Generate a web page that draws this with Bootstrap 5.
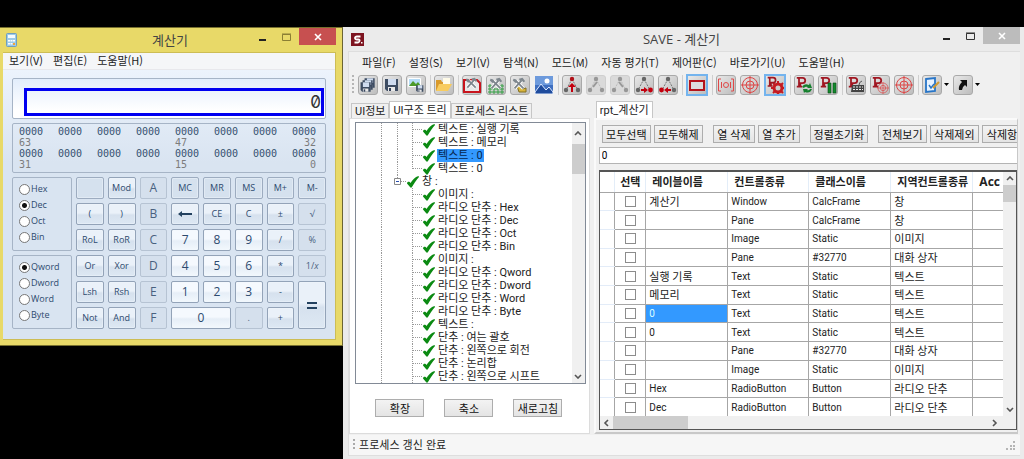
<!DOCTYPE html>
<html lang="ko">
<head>
<meta charset="utf-8">
<meta name="viewport" content="width=device-width, initial-scale=1">
<title>SAVE - 계산기</title>
<link href="https://cdn.jsdelivr.net/npm/bootstrap@5.3.0/dist/css/bootstrap.min.css" rel="stylesheet">
<style>
body{background:#000;color:#222;font:11px/14px "Noto Sans CJK KR",sans-serif;padding-top:27px;min-height:100vh}
button{font:inherit;color:inherit}
a{color:inherit;text-decoration:none}
.win-title{font:13px/24px "Open Sans","Noto Sans CJK KR",sans-serif;color:#444}
.cap-btn{border:0;background:none;padding:0;display:flex;align-items:center;justify-content:center;height:17px}
.cap-close{width:37px;background:#c75050;color:#fff}
/* calculator */
.calc{flex:0 0 33.5%;background:#e8d968;border-right:1px solid #6b6433;border-top:1px solid #77702f;border-bottom:1px solid #77702f;padding:0 6px 5px 3px;color:#2d4a6e}
.calc-client{border:1px solid #cdbd55;border-width:1px 1px 1px 0;background:linear-gradient(#ecf3fc 17px,#d9e4f1 110px)}
.calc-menu{background:#f5f6f8;height:17px;gap:10px;padding:0 6px;color:#222;border-bottom:1px solid #e8e8ec;line-height:15px}
.calc-body{padding:8px 9px 10px;gap:4px}
.calc-icon{margin:5px 0 0 3px}
.pane{border:1px solid #a6b4c6;border-radius:2px}
.display{height:41px;background:linear-gradient(#e2edfb,#fff 80%);padding:9px 1px 2px 11px}
.display input{width:100%;height:28px;border:3px solid #0000f0;border-radius:0;background:transparent;text-align:right;padding:0;font:17px/22px Inter,sans-serif;font-feature-settings:"zero";color:#333;outline:0}
.bits{font:10px/11px "DejaVu Sans Mono",monospace;padding:2px 9px 3px 6px;height:50px;color:#34506f}
.bits .idx{color:#7c7c7c}
.keys{display:grid;grid-template-columns:60px repeat(8,minmax(0,1fr));grid-template-rows:repeat(6,22px);gap:4px;font:9px/12px "Open Sans",sans-serif}
.radios{grid-column:1;grid-row:span 3;padding:3px 6px 5px;justify-content:space-between;display:flex;flex-direction:column}
.radios label{display:flex;align-items:center;gap:1px;height:16px;line-height:16px}
.radios input{appearance:none;width:11px;height:11px;margin:0;border:1px solid #777;border-radius:50%;background:#fff;flex:none}
.radios input:checked{background:radial-gradient(#111 0 2px,#fff 3px)}
.key{border:1px solid #93a3b8;border-radius:2px;padding:0;background:linear-gradient(#eaf1f9 45%,#d6e1ee 55%,#dde8f3);box-shadow:inset 0 0 0 1px #f2f7fc66}
.key:disabled{color:#49617f;border-color:#b6c3d3;background:#d5e0ed;box-shadow:none}
.flat{background:#d5e1ee;border-color:#9dacc0}
.num{font-size:12px;background:linear-gradient(#f5f9fe 45%,#e6eef7 55%,#f2f8fd)}
.big{font-size:12px}
/* main window */
.save{flex:1 1 0;min-width:0;background:#ebebeb;padding:0 4px 6px 5px;min-height:432px}
.save-icon{margin:6px 0 0 3px}
.save-client{border:1px solid #dedede;background:#f0f0f0;border-right:0}
.menu{height:20px;gap:13px;padding-left:13px;line-height:20px}
.tools{height:29px;padding:0 0 4px 3px;gap:4px}
.grip{width:2px;height:19px;background:repeating-linear-gradient(#b5b5b5 0 2px,transparent 2px 4px)}
.tool{width:20px;height:20px;padding:0;border:1px solid #a9a9a9;border-radius:3px;background:linear-gradient(135deg,#e8e8e8,#bdbdbd);display:flex;align-items:center;justify-content:center;flex:none}
.tool svg{width:18px;height:18px;flex:none}
.tool:disabled{border-color:#cfcfcf;background:#dadada}
.tool.on{width:22px;height:22px;border:2px solid #74b4ee;border-radius:0}
.tool.bare{border:0;background:none}
.sepr{width:1px;height:20px;background:#cfcfcf;margin-right:-1px}
.drop{border:0;background:none;width:7px;padding:0;margin-left:-4px;display:flex;justify-content:flex-end;align-items:center}
.tabs{height:17px;align-items:flex-end;font-family:Roboto,"Noto Sans CJK KR",sans-serif;padding-left:2px}
.tabs button{border:1px solid #c6c6c6;border-bottom:0;background:#f0f0f0;padding:0 3px;height:15px;line-height:13px;white-space:nowrap}
.tabs button.sel{background:#fff;height:17px}
.cols{gap:4px;padding-right:2px}
.leftcol{flex:0 0 36%;min-width:0}
.rightcol{flex:1 1 0;min-width:0}
.leftpane{background:#fff;border:1px solid #dcdcdc;height:316px;padding:3px 3px 0 5px}
.tree{border:1px solid #828a96;height:262px;overflow:hidden;background:#fff}
.tree ul{margin:0;padding:0;list-style:none;flex:1;font-family:Roboto,"Noto Sans CJK KR",sans-serif;--d:repeating-linear-gradient(#999 0 1px,transparent 1px 2px);--h:repeating-linear-gradient(90deg,#999 0 1px,transparent 1px 2px)}
.tree li{height:13px;line-height:13px;display:flex;align-items:center;white-space:nowrap;padding-left:67px;background:var(--d) 25px 0/1px 100% no-repeat,var(--d) 56px 0/1px 100% no-repeat,var(--h) 57px 6px/10px 1px no-repeat}
.tree li.up{background:var(--d) 25px 0/1px 100% no-repeat,var(--d) 41px 0/1px 100% no-repeat,var(--d) 56px 0/1px 100% no-repeat,var(--h) 57px 6px/10px 1px no-repeat}
.tree li.up.last{background:var(--d) 25px 0/1px 100% no-repeat,var(--d) 41px 0/1px 100% no-repeat,var(--d) 56px 0/1px 7px no-repeat,var(--h) 57px 6px/10px 1px no-repeat}
.tree li.node{padding-left:38px;background:var(--d) 25px 0/1px 100% no-repeat,var(--d) 41px 0/1px 4px no-repeat,var(--h) 45px 6px/6px 1px no-repeat}
.tree li svg{width:12px;height:12px;margin-right:2px;flex:none}
.tree li svg.exp{width:7px;height:7px;margin-right:6px}
.tree li span{padding:0 1px}
.tree li .hit{background:#3399ff;color:#06264d}
.vbar{width:13px;background:#f0f0f0;display:flex;flex-direction:column;align-items:center;flex:none}
.vbar i,.hbar i{background:#cdcdcd;flex:none}
.cmds{gap:20px;margin-top:15px;padding-right:3px}
.cmd{border:1px solid #adadad;background:linear-gradient(#f3f3f3,#e4e4e4);height:18px;line-height:14px;padding:0;width:49px;white-space:nowrap;flex:none;color:#111}
.w42{width:42px}.w58{width:58px}
.rightpane{border:2px solid #fafafa;border-right:1px solid #c8c8c8;border-bottom-color:#c8c8c8;height:316px;padding:5px 0 0 3px}
.strip{gap:3px;overflow:hidden;padding-left:3px}
.strip .gapr{margin-right:7px}
.val{border:1px solid #b4b4b4;border-right:0;height:17px;width:100%;padding:0 2px;font:10px/12px Roboto,sans-serif;background:#fff;display:block;margin:4px 0 6px;border-radius:0}
.gridbox{border:2px solid #555;border-width:2px 1px 1px 1px;background:#fff;height:260px;overflow:hidden}
.sheet{table-layout:fixed;width:100%;height:244px;border-collapse:collapse;font:10px/15px Roboto,"Noto Sans CJK KR",sans-serif;color:#222}
.sheet th,.sheet td{border:1px solid #a6a6a6;border-width:0 0 1px 1px;padding:0 0 0 3px;white-space:nowrap;overflow:hidden}
.sheet th{font:bold 11px/15px "Noto Sans CJK KR",sans-serif;padding-left:6px;border-left-color:#e3edf8;height:20px}
.sheet td:first-child{border-color:#e3ecf8;border-left:0}
.sheet th:first-child{border-left:0}
.sheet td:nth-child(2),.sheet th:nth-child(2){padding:0;text-align:center}
.sheet td.ko{font-size:11px;padding-top:2px}
.sheet .pick{background:#3399ff;color:#dff}
.sheet input{appearance:none;width:11px;height:11px;border:1px solid #8c8c8c;margin:0;background:#fff;display:block;margin:0 auto}
.sheet .acc{font:bold 12px/15px "Open Sans",sans-serif}
.sheet tr:last-child td{border-bottom:0}
.hbar{height:13px;background:#f0f0f0;display:flex;align-items:center}
.status{height:20px;background:#f6f6f6;padding:0 0 0 4px;line-height:18px;margin-top:1px}
</style>
</head>
<body>
<svg width="0" height="0" class="position-absolute" aria-hidden="true">
 <defs>
 <symbol id="disk" viewBox="0 0 18 18"><path d="M2 3h13v12H4l-2-2z" fill="#3d4c62"/><path d="M5 3h8v6H5z" fill="#cfdcf0"/><path d="M5 11h7v4H5z" fill="#e9e9e9"/><path d="M6 12h2v3H6z" fill="#33415a"/></symbol>
 <symbol id="tri" viewBox="0 0 18 18"><path d="M9 3 3 14M9 3l6 11" stroke="#777" stroke-dasharray="2 1"/></symbol>
 <symbol id="target" viewBox="0 0 18 18"><g fill="none" stroke="#dd4545"><circle cx="9" cy="9" r="7.500"/><circle cx="9" cy="9" r="4"/><path d="M9 0v18M0 9h18"/></g></symbol>
 <symbol id="pp" viewBox="0 0 18 18"><path d="M2 2h6.500q3 0 3 3t-3 3H6v4M4.500 2v10M2 12h6" fill="none" stroke="#a01722" stroke-width="2"/></symbol>
 <symbol id="hammer" viewBox="0 0 18 18"><path d="m4 14 8-9M5 5l9 9" stroke="#fff" stroke-width="4"/><path d="m4 14 8-9M5 5l9 9" stroke="#7d858c" stroke-width="2"/><path d="M9 3l4-1 3 4-2 1-2-2-2 1zM3 3l3 1 1 3-2 1-3-3z" fill="#7e878e"/></symbol>
 <symbol id="check" viewBox="0 0 12 12"><path d="M0 7.500C0 5.500 2.500 5 3.500 7 5.500 4 8 1 11.500 0l.5 1C9 4 7 8 5 11q-1 1.500-2 0z" fill="#0b8a12"/></symbol>
 <symbol id="up" viewBox="0 0 8 5"><path d="m1 4 3-3 3 3" fill="none" stroke="#555" stroke-width="1.600"/></symbol>
 <symbol id="dn" viewBox="0 0 8 5"><path d="m1 1 3 3 3-3" fill="none" stroke="#555" stroke-width="1.600"/></symbol>
 </defs>
</svg>

<div class="d-flex align-items-start">
<section class="calc">
 <header class="d-flex align-items-start">
  <svg class="calc-icon" width="11" height="14"><rect x=".5" y=".5" width="10" height="13" rx="1" fill="#9dcbe8" stroke="#6f9fc0"/><path d="M2 2h7v3H2z" fill="#f5fbff"/><path d="M2 7h2v1.500H2zm2.500 0h2v1.500h-2zM7 7h2v1.500H7zM2 10h2v1.500H2zm2.500 0h2v1.500h-2z" fill="#fff"/><path d="M7 10h2v2H7z" fill="#f2a33a"/></svg>
  <div class="win-title flex-grow-1 text-center ps-5 ms-3">계산기</div>
  <button class="cap-btn me-3" aria-label="최소화"><svg width="7" height="10"><path d="M0 7h7v2H0z" fill="#222"/></svg></button>
  <button class="cap-btn me-2" aria-label="최대화"><svg width="9" height="8"><path d="M.5 1.500h8v6h-8zM0 1h9" fill="none" stroke="#8b7f34"/></svg></button>
  <button class="cap-btn cap-close" aria-label="닫기"><svg width="8" height="8"><path d="m1 1 6 6m0-6L1 7" stroke="#fff" stroke-width="1.600"/></svg></button>
 </header>
 <div class="calc-client">
  <nav class="calc-menu d-flex"><a href="#">보기(V)</a><a href="#">편집(E)</a><a href="#">도움말(H)</a></nav>
  <div class="calc-body d-flex flex-column">
   <div class="pane display"><input type="text" value="0" aria-label="결과" readonly></div>
   <div class="pane bits">
    <div class="d-flex justify-content-between"><span>0000</span><span>0000</span><span>0000</span><span>0000</span><span>0000</span><span>0000</span><span>0000</span><span>0000</span></div>
    <div class="d-flex idx"><span style="width:52.5%">63</span><span>47</span><span class="ms-auto">32</span></div>
    <div class="d-flex justify-content-between"><span>0000</span><span>0000</span><span>0000</span><span>0000</span><span>0000</span><span>0000</span><span>0000</span><span>0000</span></div>
    <div class="d-flex idx"><span style="width:52.5%">31</span><span>15</span><span class="ms-auto">0</span></div>
   </div>
   <div class="keys">
    <div class="pane radios">
     <label><input type="radio" name="base">Hex</label><label><input type="radio" name="base" checked>Dec</label><label><input type="radio" name="base">Oct</label><label><input type="radio" name="base">Bin</label>
    </div>
    <button class="key flat" aria-label="빈 단추"></button><button class="key">Mod</button><button class="key big" disabled>A</button><button class="key flat">MC</button><button class="key flat">MR</button><button class="key flat">MS</button><button class="key flat">M+</button><button class="key flat">M-</button>
    <button class="key">(</button><button class="key">)</button><button class="key big" disabled>B</button><button class="key" aria-label="백스페이스"><svg width="14" height="6" class="d-block mx-auto"><path d="M0 3l4-3v2h10v2H4v2z" fill="#23415f"/></svg></button><button class="key">CE</button><button class="key">C</button><button class="key">±</button><button class="key" disabled>√</button>
    <button class="key">RoL</button><button class="key">RoR</button><button class="key big" disabled>C</button><button class="key num">7</button><button class="key num">8</button><button class="key num">9</button><button class="key">/</button><button class="key" disabled>%</button>
    <div class="pane radios">
     <label><input type="radio" name="size" checked>Qword</label><label><input type="radio" name="size">Dword</label><label><input type="radio" name="size">Word</label><label><input type="radio" name="size">Byte</label>
    </div>
    <button class="key">Or</button><button class="key">Xor</button><button class="key big" disabled>D</button><button class="key num">4</button><button class="key num">5</button><button class="key num">6</button><button class="key">*</button><button class="key" disabled>1/<i>x</i></button>
    <button class="key">Lsh</button><button class="key">Rsh</button><button class="key big" disabled>E</button><button class="key num">1</button><button class="key num">2</button><button class="key num">3</button><button class="key">-</button><button class="key" style="grid-row:span 2" aria-label="같음"><svg width="10" height="7" class="d-block mx-auto"><path d="M0 0h10v2H0zM0 5h10v2H0z" fill="#23415f"/></svg></button>
    <button class="key">Not</button><button class="key">And</button><button class="key big" disabled>F</button><button class="key num" style="grid-column:span 2">0</button><button class="key" disabled>.</button><button class="key">+</button>
   </div>
  </div>
 </div>
</section>

<section class="save">
 <header class="d-flex align-items-start">
  <svg class="save-icon" width="13" height="13"><path d="M0 0h13v13H0z" fill="#7d1420"/><path d="M9.500 3.500H6q-2 0-2 1.500t2 1.500h1.500q1.500 0 1 1.500T7 9.500H3.500" fill="none" stroke="#fff" stroke-width="1.800"/><path d="M10 9h1.500v1.500H10z" fill="#fff"/></svg>
  <div class="win-title flex-grow-1 text-center ps-5 ms-2">SAVE - 계산기</div>
  <button class="cap-btn me-3" aria-label="최소화"><svg width="7" height="10"><path d="M0 7h7v2H0z" fill="#222"/></svg></button>
  <button class="cap-btn me-2" aria-label="최대화"><svg width="9" height="8"><path d="M.5 1.500h8v6h-8zM0 1h9" fill="none" stroke="#333"/></svg></button>
  <button class="cap-btn cap-close" style="background:#bcbcbc" aria-label="닫기"><svg width="8" height="8"><path d="m1 1 6 6m0-6L1 7" stroke="#fff" stroke-width="1.600"/></svg></button>
 </header>
 <div class="save-client">
  <nav class="menu d-flex"><a href="#">파일(F)</a><a href="#">설정(S)</a><a href="#">보기(V)</a><a href="#">탐색(N)</a><a href="#">모드(M)</a><a href="#">자동 평가(T)</a><a href="#">제어판(C)</a><a href="#">바로가기(U)</a><a href="#">도움말(H)</a></nav>
  <div class="tools d-flex align-items-center">
   <span class="grip"></span>
   <button class="tool" aria-label="모두 저장"><svg><use href="#disk" x="4" y="0" width="14" height="14"/><use href="#disk" x="2" y="2" width="14" height="14"/><use href="#disk" x="0" y="4" width="14" height="14"/></svg></button>
   <button class="tool" aria-label="저장"><svg><use href="#disk" x="0" y="0" width="18" height="18"/></svg></button>
   <button class="tool" aria-label="그림 저장"><svg><path d="M1.500 2.500h12v8h-12z" fill="#b5dcf7" stroke="#fff"/><path d="m2 10 4-5 3 3 2-2 3 4z" fill="#4c9a2a"/><use href="#disk" x="8" y="7" width="10" height="11"/></svg></button>
   <span class="sepr"></span>
   <button class="tool" aria-label="열기"><svg><path d="M1 15V4h5l1 2h6v3z" fill="#d99a2c"/><path d="M8 2h7v7H8z" fill="#fffbe8"/><path d="m1 15 3-7h13l-4 7z" fill="#f8cc5f"/></svg></button>
   <span class="sepr"></span>
   <button class="tool" aria-label="도구 1"><svg><path d="M1 4h13l3 3v9H1z" fill="#e8e8e8" stroke="#c8141d" stroke-width="2"/><use href="#hammer" x="1" width="15" height="15"/></svg></button>
   <button class="tool" aria-label="도구 2"><svg><path d="M1 10h16M1 13h16M1 16h16M3 8v10M7 8v10M11 8v10M15 8v10" stroke="#35a145"/><use href="#hammer" x="1" width="16" height="16"/></svg></button>
   <button class="tool" aria-label="도구 3"><svg><path d="M6 10h3l2 3 4-1v4H8z" fill="#d8b43a" stroke="#826f20"/><use href="#hammer" width="16" height="16"/></svg></button>
   <button class="tool bare" aria-label="이미지"><svg><path d="M0 0h18v18H0z" fill="#3f6fc0"/><path d="M0 0h18v9H0z" fill="#6d9adc"/><circle cx="12" cy="5" r="2.500" fill="#fff"/><path d="m0 16 6-8 5 6 3-3 4 5v2H0z" fill="#1f4c9d" stroke="#dfeaff"/></svg></button>
   <span class="sepr"></span>
   <button class="tool" aria-label="상위"><svg><use href="#tri"/><circle cx="9" cy="3" r="2.200" fill="#b01018"/><circle cx="3" cy="14" r="2.200" fill="#666"/><circle cx="15" cy="14" r="2.200" fill="#666"/><path d="m9 7 4 4h-3v5H8v-5H5z" fill="#c3000e"/></svg></button>
   <button class="tool" disabled aria-label="왼쪽 하위"><svg opacity=".3"><use href="#tri"/><circle cx="9" cy="3" r="2.200"/><circle cx="3" cy="14" r="2.200"/><circle cx="15" cy="14" r="2.200"/><path d="M10 6 6 11" stroke="#000" stroke-width="2"/></svg></button>
   <button class="tool" disabled aria-label="오른쪽 하위"><svg opacity=".3"><use href="#tri"/><circle cx="9" cy="3" r="2.200"/><circle cx="3" cy="14" r="2.200"/><circle cx="15" cy="14" r="2.200"/><path d="m8 6 4 5" stroke="#000" stroke-width="2"/></svg></button>
   <button class="tool" aria-label="다음"><svg><use href="#tri"/><circle cx="9" cy="3" r="2.200" fill="#666"/><circle cx="3" cy="14" r="2.200" fill="#666"/><circle cx="15.500" cy="14" r="2.400" fill="#c3000e"/><path d="M6 13h3v-2l4 3-4 3v-2H6z" fill="#c3000e"/></svg></button>
   <button class="tool" aria-label="이전"><svg><use href="#tri"/><circle cx="9" cy="3" r="2.200" fill="#666"/><circle cx="2.500" cy="14" r="2.400" fill="#c3000e"/><circle cx="15" cy="14" r="2.200" fill="#666"/><path d="M12 13H9v-2l-4 3 4 3v-2h3z" fill="#c3000e"/></svg></button>
   <span class="sepr"></span>
   <button class="tool on" aria-label="영역 표시"><svg><path d="M2 5h14v9H2z" fill="#ddd" stroke="#b4141c" stroke-width="2"/></svg></button>
   <span class="sepr"></span>
   <button class="tool" aria-label="초점"><svg><path d="M4 3H1.500v12H4M14 3h2.500v12H14M4.500 6v6M13.500 6v6" fill="none" stroke="#e04a4a"/><circle cx="9" cy="9" r="2.500" fill="none" stroke="#e04a4a"/></svg></button>
   <button class="tool" aria-label="대상"><svg><use href="#target"/></svg></button>
   <button class="tool on" aria-label="프로세스 설정"><svg><circle cx="12" cy="12" r="4" fill="none" stroke="#c51b22" stroke-width="3"/><path d="M12 5v3M12 16v2M5 12h3M16 12h2M7 7l2 2M15 15l2 2M17 7l-2 2M9 15l-2 2" stroke="#c51b22" stroke-width="2"/><use href="#pp" width="15" height="15"/></svg></button>
   <span class="sepr"></span>
   <button class="tool" aria-label="새로고침"><svg><use href="#pp" width="16" height="16"/><path d="M7 11q2-4 7-2l1-2 2 5h-5l1-1q-3-1-4 1zM17 13q-2 5-7 3l-1 1-1-4h5l-1 1q2 1 3-1z" fill="#15812e"/></svg></button>
   <button class="tool" aria-label="일시 정지"><svg><use href="#pp" width="16" height="16"/><path d="M9 7h3v10H9zM14 7h3v10h-3z" fill="#138a2d" stroke="#084c15" stroke-width=".6"/></svg></button>
   <span class="sepr"></span>
   <button class="tool" aria-label="키보드"><svg><use href="#pp" width="16" height="16"/><path d="M5 9h12v7H4z" fill="#444"/><path d="M6 11h10M6 13.500h10" stroke="#eee" stroke-dasharray="2 1"/><path d="M12 9q0-3 3-4" stroke="#555" fill="none"/></svg></button>
   <button class="tool" aria-label="프로세스 대상"><svg><use href="#target" x="6" y="6" width="12" height="12"/><use href="#pp" width="16" height="16"/></svg></button>
   <button class="tool" aria-label="찾기"><svg><use href="#target"/></svg></button>
   <span class="sepr"></span>
   <button class="tool" aria-label="편집"><svg><path d="m3 3 9-1v13l-9 1z" fill="#e8f3ff" stroke="#2875c7" stroke-width="1.800"/><path d="m6 9 2 3 3-4" fill="none" stroke="#2875c7" stroke-width="1.500"/><path d="m10 12 6-6" stroke="#d09a31" stroke-width="2"/></svg></button>
   <button class="drop" aria-label="편집 메뉴"><svg width="5" height="3"><path d="M0 0h5L2.500 3z"/></svg></button>
   <button class="tool" aria-label="바로 가기"><svg><path d="M6 4h7v7l-2-2q-3 2-3 5H5q-1-4 3-8z" fill="#111"/></svg></button>
   <button class="drop" aria-label="바로 가기 메뉴"><svg width="5" height="3"><path d="M0 0h5L2.500 3z"/></svg></button>
  </div>
  <div class="cols d-flex">
   <div class="leftcol">
    <div class="tabs d-flex"><button>UI정보</button><button class="sel">UI구조 트리</button><button>프로세스 리스트</button></div>
    <div class="leftpane">
     <div class="tree d-flex">
      <ul>
       <li class="up"><svg><use href="#check"/></svg><span>텍스트 : 실행 기록</span></li>
       <li class="up"><svg><use href="#check"/></svg><span>텍스트 : 메모리</span></li>
       <li class="up"><svg><use href="#check"/></svg><span class="hit">텍스트 : 0</span></li>
       <li class="up last"><svg><use href="#check"/></svg><span>텍스트 : 0</span></li>
       <li class="node"><svg class="exp"><path d="M.5.5h6v6h-6z" fill="#fff" stroke="#888"/><path d="M2 3.500h3" stroke="#2a4fae"/></svg><svg><use href="#check"/></svg><span>창 :</span></li>
       <li><svg><use href="#check"/></svg><span>이미지 :</span></li>
       <li><svg><use href="#check"/></svg><span>라디오 단추 : Hex</span></li>
       <li><svg><use href="#check"/></svg><span>라디오 단추 : Dec</span></li>
       <li><svg><use href="#check"/></svg><span>라디오 단추 : Oct</span></li>
       <li><svg><use href="#check"/></svg><span>라디오 단추 : Bin</span></li>
       <li><svg><use href="#check"/></svg><span>이미지 :</span></li>
       <li><svg><use href="#check"/></svg><span>라디오 단추 : Qword</span></li>
       <li><svg><use href="#check"/></svg><span>라디오 단추 : Dword</span></li>
       <li><svg><use href="#check"/></svg><span>라디오 단추 : Word</span></li>
       <li><svg><use href="#check"/></svg><span>라디오 단추 : Byte</span></li>
       <li><svg><use href="#check"/></svg><span>텍스트 :</span></li>
       <li><svg><use href="#check"/></svg><span>단추 : 여는 괄호</span></li>
       <li><svg><use href="#check"/></svg><span>단추 : 왼쪽으로 회전</span></li>
       <li><svg><use href="#check"/></svg><span>단추 : 논리합</span></li>
       <li><svg><use href="#check"/></svg><span>단추 : 왼쪽으로 시프트</span></li>
      </ul>
      <div class="vbar py-1"><svg width="8" height="5" class="my-1"><use href="#up"/></svg><i class="w-100 mt-1" style="height:30px"></i><svg width="8" height="5" class="mt-auto"><use href="#dn"/></svg></div>
     </div>
     <div class="cmds d-flex justify-content-center"><button class="cmd">확장</button><button class="cmd">축소</button><button class="cmd">새로고침</button></div>
    </div>
   </div>
   <div class="rightcol">
    <div class="tabs d-flex"><button class="sel">rpt_계산기</button></div>
    <div class="rightpane">
     <div class="strip d-flex"><button class="cmd">모두선택</button><button class="cmd gapr">모두해제</button><button class="cmd w42">열 삭제</button><button class="cmd w42 gapr">열 추가</button><button class="cmd w58 gapr">정렬초기화</button><button class="cmd">전체보기</button><button class="cmd">삭제제외</button><button class="cmd text-start ps-1">삭제항</button></div>
     <input class="val" type="text" value="0" aria-label="값">
     <div class="gridbox">
      <div class="d-flex">
       <table class="sheet">
        <colgroup><col style="width:15px"><col style="width:31px"><col style="width:82px"><col style="width:81px"><col style="width:82px"><col style="width:82px"><col></colgroup>
        <thead><tr><th></th><th>선택</th><th>레이블이름</th><th>컨트롤종류</th><th>클래스이름</th><th>지역컨트롤종류</th><th class="acc">Acc</th></tr></thead>
        <tbody>
        <tr><td></td><td><input type="checkbox" aria-label="행 1"></td><td class="ko">계산기</td><td>Window</td><td>CalcFrame</td><td class="ko">창</td><td></td></tr>
        <tr><td></td><td><input type="checkbox" aria-label="행 2"></td><td></td><td>Pane</td><td>CalcFrame</td><td class="ko">창</td><td></td></tr>
        <tr><td></td><td><input type="checkbox" aria-label="행 3"></td><td></td><td>Image</td><td>Static</td><td class="ko">이미지</td><td></td></tr>
        <tr><td></td><td><input type="checkbox" aria-label="행 4"></td><td></td><td>Pane</td><td>#32770</td><td class="ko">대화 상자</td><td></td></tr>
        <tr><td></td><td><input type="checkbox" aria-label="행 5"></td><td class="ko">실행 기록</td><td>Text</td><td>Static</td><td class="ko">텍스트</td><td></td></tr>
        <tr><td></td><td><input type="checkbox" aria-label="행 6"></td><td class="ko">메모리</td><td>Text</td><td>Static</td><td class="ko">텍스트</td><td></td></tr>
        <tr><td></td><td><input type="checkbox" aria-label="행 7"></td><td class="pick">0</td><td>Text</td><td>Static</td><td class="ko">텍스트</td><td></td></tr>
        <tr><td></td><td><input type="checkbox" aria-label="행 8"></td><td>0</td><td>Text</td><td>Static</td><td class="ko">텍스트</td><td></td></tr>
        <tr><td></td><td><input type="checkbox" aria-label="행 9"></td><td></td><td>Pane</td><td>#32770</td><td class="ko">대화 상자</td><td></td></tr>
        <tr><td></td><td><input type="checkbox" aria-label="행 10"></td><td></td><td>Image</td><td>Static</td><td class="ko">이미지</td><td></td></tr>
        <tr><td></td><td><input type="checkbox" aria-label="행 11"></td><td>Hex</td><td>RadioButton</td><td>Button</td><td class="ko">라디오 단추</td><td></td></tr>
        <tr><td></td><td><input type="checkbox" aria-label="행 12"></td><td>Dec</td><td>RadioButton</td><td>Button</td><td class="ko">라디오 단추</td><td></td></tr>
        </tbody>
       </table>
       <div class="vbar py-1"><svg width="8" height="5"><use href="#up"/></svg><i class="w-100 mt-1" style="height:17px"></i><svg width="8" height="5" class="mt-auto"><use href="#dn"/></svg></div>
      </div>
      <div class="hbar"><svg width="13" height="8"><path d="M8 1 5 4l3 3" fill="none" stroke="#555" stroke-width="1.600"/></svg><i style="width:75px;height:13px"></i><svg width="28" height="8" class="ms-auto"><path d="m5 1 3 3-3 3" fill="none" stroke="#555" stroke-width="1.600"/></svg></div>
     </div>
    </div>
   </div>
  </div>
  <footer class="status d-flex"><svg width="2" height="12" class="mt-1"><path d="M1 0v12" stroke="#aaa" stroke-width="2" stroke-dasharray="2 2"/></svg><span class="ms-1">프로세스 갱신 완료</span><svg width="10" height="10" class="ms-auto me-1 align-self-end mb-1"><path d="M7 0h2v2H7zM4 4h2v2H4zM7 4h2v2H7zM0 7h2v2H0zM4 7h2v2H4zM7 7h2v2H7z" fill="#b5b5b5"/></svg></footer>
 </div>
</section>
</div>
<script src="https://cdn.jsdelivr.net/npm/bootstrap@5.3.0/dist/js/bootstrap.bundle.min.js"></script>
</body>
</html>
